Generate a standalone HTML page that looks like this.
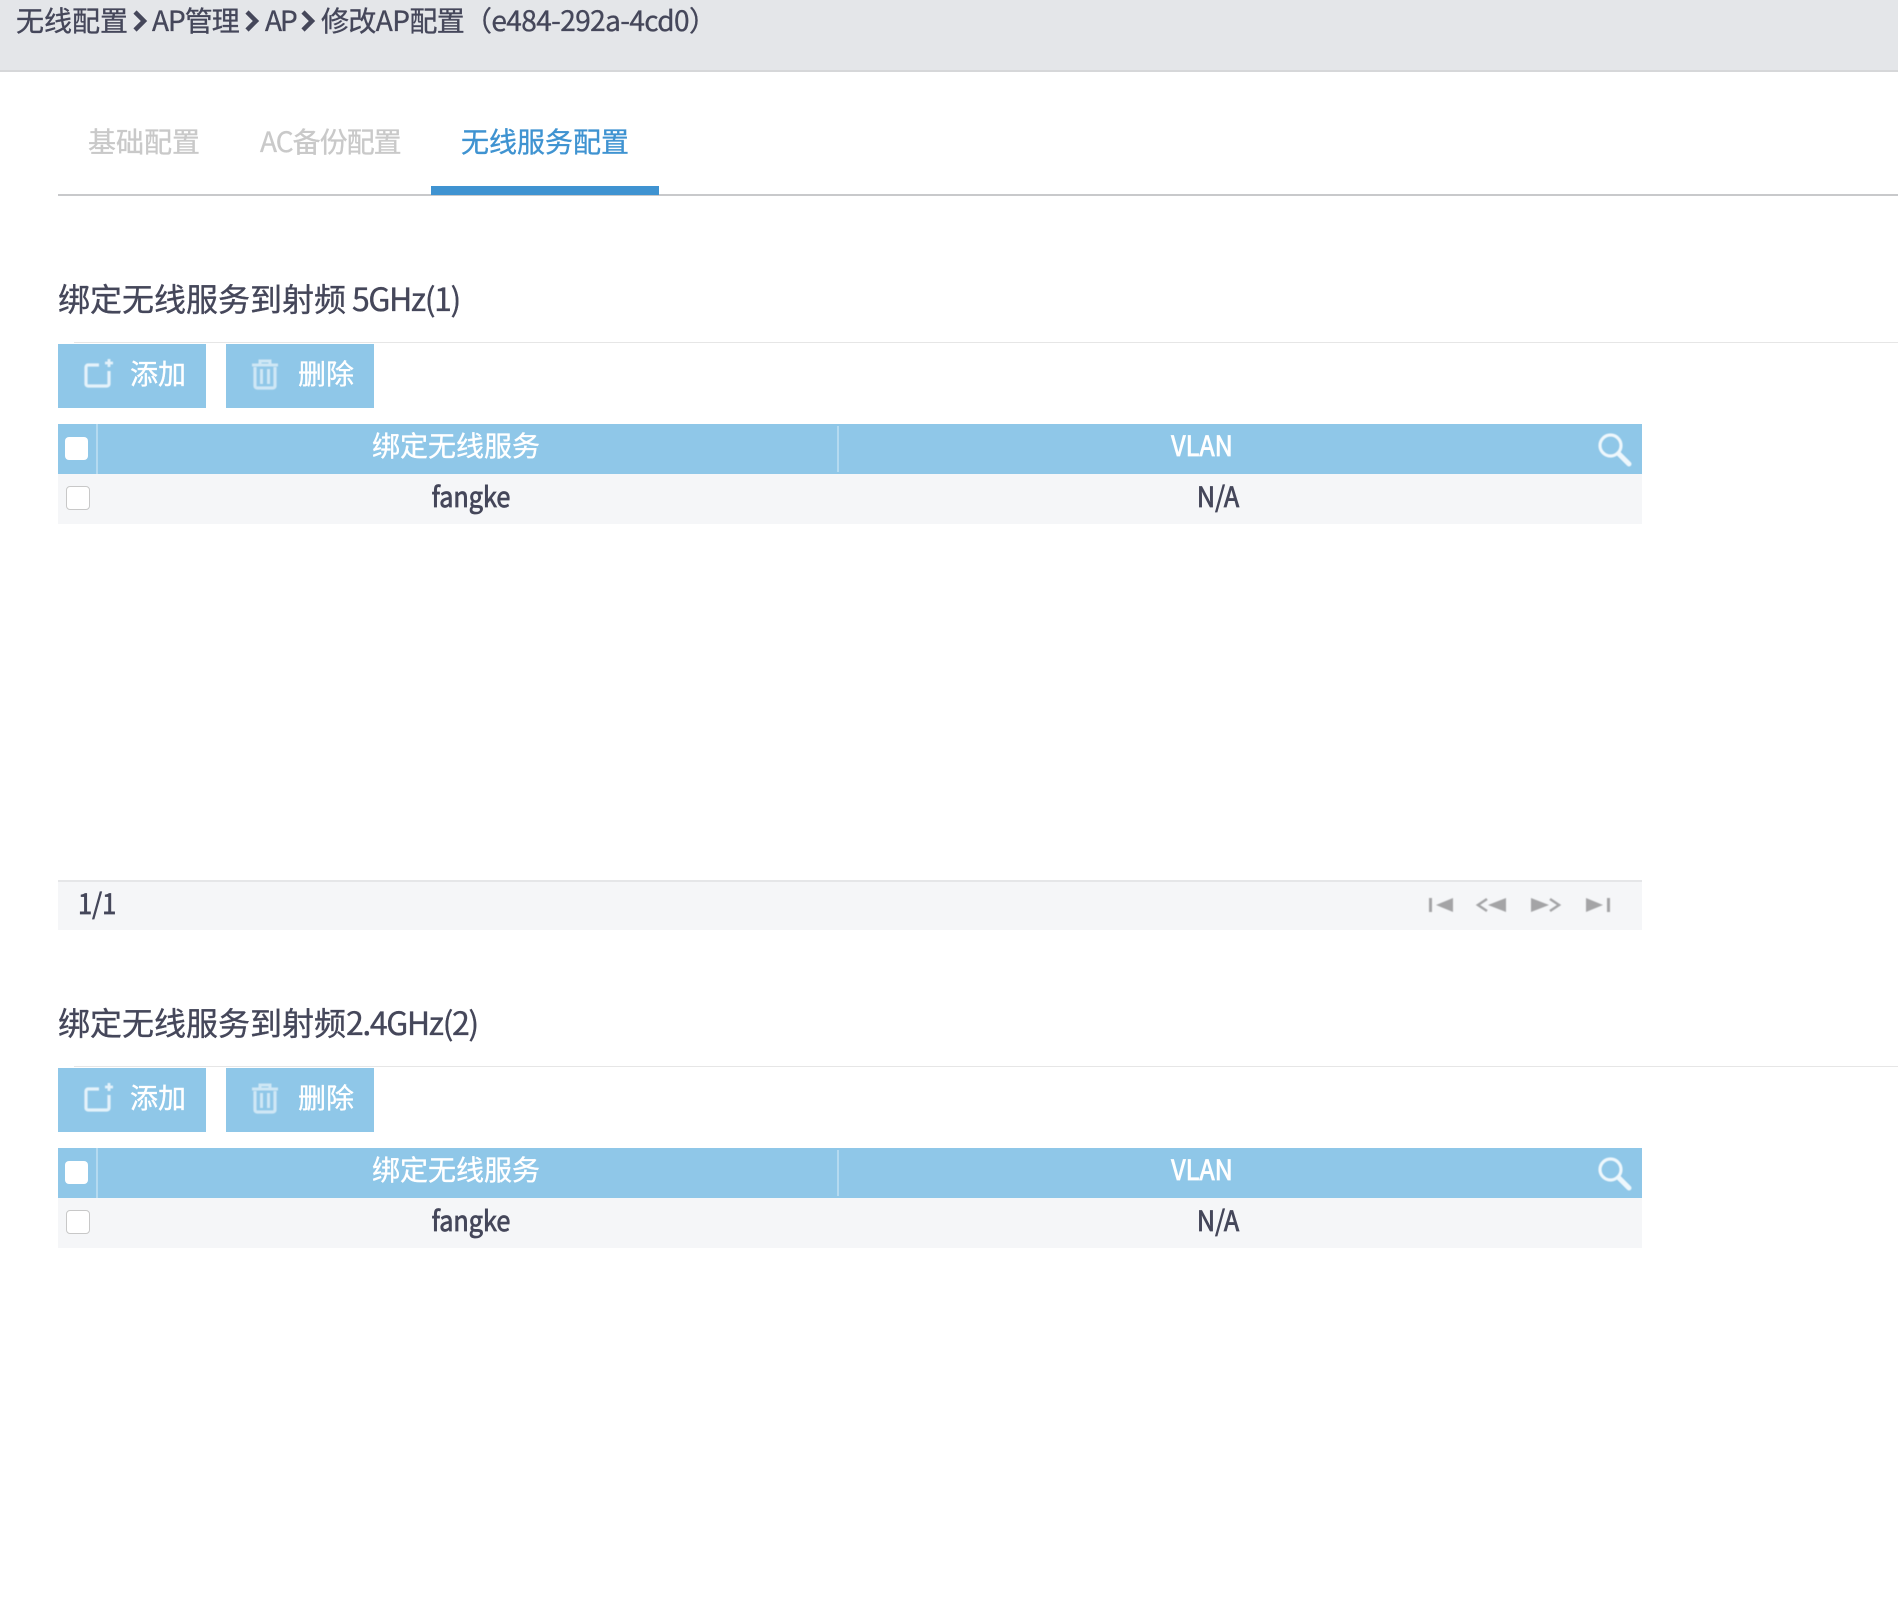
<!DOCTYPE html>
<html lang="zh-CN">
<head>
<meta charset="utf-8">
<title>修改AP配置</title>
<style>
html,body{margin:0;padding:0;background:#fff;}
body{width:1898px;height:1598px;position:relative;overflow:hidden;font-family:"Noto Sans CJK SC","Liberation Sans",sans-serif;color:#45475a;font-size:28px;}
.a{position:absolute;}
.t{position:absolute;line-height:40px;height:40px;white-space:nowrap;-webkit-text-stroke:.35px currentColor;}
.c{transform:translateX(-50%) scaleX(.9);-webkit-text-stroke:.8px currentColor;}
.sec{position:absolute;left:0;width:1898px;height:600px;}
.btn{position:absolute;top:344px;width:148px;height:64px;background:#8fc7e8;}
.btn .t{color:#fff;top:9px;}
.head{position:absolute;left:58px;top:424px;width:1584px;height:50px;background:#8fc7e8;}
.row{position:absolute;left:58px;top:474px;width:1584px;height:50px;background:#f5f6f8;}
.w{color:#fff;}
.cb{position:absolute;box-sizing:border-box;border-radius:4px;}
svg{position:absolute;display:block;overflow:visible;}
.blur{filter:blur(.5px);}
.ttl{font-size:32px;}
.ttl span{letter-spacing:-1.4px;}
</style>
</head>
<body>
<div class="a" style="left:0;top:0;width:1898px;height:70px;background:#e4e6e9;"></div>
<div class="a" style="left:0;top:70px;width:1898px;height:2px;background:#d6d7d9;"></div>

<div class="t" style="left:16px;top:0px;">无线配置</div>
<svg style="left:132px;top:10px;" width="16" height="22" viewBox="0 0 16 22"><path d="M3 2 L12 11 L3 20" fill="none" stroke="#45475a" stroke-width="4.5"/></svg>
<div class="t" style="left:152px;top:0px;letter-spacing:-1px;">AP管理</div>
<svg style="left:244px;top:10px;" width="16" height="22" viewBox="0 0 16 22"><path d="M3 2 L12 11 L3 20" fill="none" stroke="#45475a" stroke-width="4.5"/></svg>
<div class="t" style="left:265px;top:0px;letter-spacing:-2px;">AP</div>
<svg style="left:300px;top:10px;" width="16" height="22" viewBox="0 0 16 22"><path d="M3 2 L12 11 L3 20" fill="none" stroke="#45475a" stroke-width="4.5"/></svg>
<div class="t" style="left:321px;top:0px;letter-spacing:-.6px;">修改AP配置</div>
<div class="t" style="left:464px;top:0px;letter-spacing:-.6px;">（e484-292a-4cd0）</div>

<div class="t" style="left:88px;top:121px;color:#c9c9c9;">基础配置</div>
<div class="t" style="left:260px;top:121px;color:#c9c9c9;letter-spacing:-1px;">AC备份配置</div>
<div class="t" style="left:461px;top:121px;color:#3f93d1;">无线服务配置</div>
<div class="a" style="left:58px;top:194px;width:1840px;height:2px;background:#c8c9cb;"></div>
<div class="a" style="left:431px;top:186px;width:228px;height:9px;background:#3f93d1;"></div>

<!-- Section 1 -->
<div class="sec" style="top:0;">
  <div class="t ttl" style="left:58px;top:278px;">绑定无线服务到射频<span style="margin-left:6px;">5GHz(1)</span></div>
  <div class="a" style="left:74px;top:342px;width:1824px;height:1px;background:#e6e6e6;"></div>
  <div class="btn" style="left:58px;">
    <svg class="blur" style="left:27px;top:15px;" width="30" height="30" viewBox="0 0 30 30"><path d="M14 6 H3 a2 2 0 0 0-2 2 V25 a2 2 0 0 0 2 2 H22 a2 2 0 0 0 2-2 V12" fill="none" stroke="#e4f2fa" stroke-width="3.200"/><path d="M24 0 V8 M20 4 H28" stroke="#e4f2fa" stroke-width="2.800"/></svg>
    <div class="t" style="left:72px;">添加</div>
  </div>
  <div class="btn" style="left:226px;">
    <svg class="blur" style="left:26px;top:15px;" width="26" height="30" viewBox="0 0 26 30"><path d="M0 6 H26 M8 6 V2 H18 V6" fill="none" stroke="#cfe7f5" stroke-width="3"/><path d="M3 8 V27 a2 2 0 0 0 2 2 H21 a2 2 0 0 0 2-2 V8" fill="none" stroke="#cfe7f5" stroke-width="3.200"/><path d="M9.500 10 V25 M16.500 10 V25" stroke="#cfe7f5" stroke-width="3"/></svg>
    <div class="t" style="left:72px;">删除</div>
  </div>
  <div class="head">
    <div class="a" style="left:38px;top:0;width:2px;height:50px;background:#b4daf0;"></div>
    <div class="a" style="left:779px;top:2px;width:2px;height:46px;background:#b4daf0;"></div>
    <div class="cb" style="left:7px;top:13px;width:23px;height:23px;background:#fff;"></div>
    <div class="t w" style="left:314px;top:1px;">绑定无线服务</div>
    <div class="t w c" style="left:1144px;top:1px;">VLAN</div>
    <svg class="blur" style="left:1540px;top:9px;" width="34" height="34" viewBox="0 0 34 34"><circle cx="12.500" cy="12.500" r="10.500" fill="none" stroke="#eef7fc" stroke-width="3.200"/><path d="M21 21 L31 31" stroke="#eef7fc" stroke-width="5" stroke-linecap="round"/></svg>
  </div>
  <div class="row">
    <div class="cb" style="left:8px;top:12px;width:24px;height:24px;background:#fff;border:1px solid #c8c8c8;"></div>
    <div class="t c" style="left:413px;top:2px;">fangke</div>
    <div class="t c" style="left:1160px;top:2px;">N/A</div>
  </div>
</div>

<!-- Pager -->
<div class="a" style="left:58px;top:880px;width:1584px;height:50px;background:#f5f6f8;"></div>
<div class="a" style="left:58px;top:880px;width:1584px;height:2px;background:#e5e6e8;"></div>
<div class="t" style="left:78px;top:883px;transform:scaleX(.91);transform-origin:left center;-webkit-text-stroke:.7px currentColor;">1/1</div>
<svg class="blur" style="left:1429px;top:898px;" width="182" height="14" viewBox="0 0 182 14">
  <g fill="#a4a4a6">
    <rect x="0" y="0" width="3" height="14"/><path d="M7 7 L24 0 V14 Z"/>
    <path d="M58 1 L49 7 L58 13" fill="none" stroke="#a4a4a6" stroke-width="2.500"/><path d="M59 7 L77 0 V14 Z"/>
    <path d="M102 0 L120 7 L102 14 Z"/><path d="M121 1 L130 7 L121 13" fill="none" stroke="#a4a4a6" stroke-width="2.500"/>
    <path d="M157 0 L174 7 L157 14 Z"/><rect x="178" y="0" width="3" height="14"/>
  </g>
</svg>

<!-- Section 2 -->
<div class="sec" style="top:724px;">
  <div class="t ttl" style="left:58px;top:278px;">绑定无线服务到射频<span>2.4GHz(2)</span></div>
  <div class="a" style="left:74px;top:342px;width:1824px;height:1px;background:#e6e6e6;"></div>
  <div class="btn" style="left:58px;">
    <svg class="blur" style="left:27px;top:15px;" width="30" height="30" viewBox="0 0 30 30"><path d="M14 6 H3 a2 2 0 0 0-2 2 V25 a2 2 0 0 0 2 2 H22 a2 2 0 0 0 2-2 V12" fill="none" stroke="#e4f2fa" stroke-width="3.200"/><path d="M24 0 V8 M20 4 H28" stroke="#e4f2fa" stroke-width="2.800"/></svg>
    <div class="t" style="left:72px;">添加</div>
  </div>
  <div class="btn" style="left:226px;">
    <svg class="blur" style="left:26px;top:15px;" width="26" height="30" viewBox="0 0 26 30"><path d="M0 6 H26 M8 6 V2 H18 V6" fill="none" stroke="#cfe7f5" stroke-width="3"/><path d="M3 8 V27 a2 2 0 0 0 2 2 H21 a2 2 0 0 0 2-2 V8" fill="none" stroke="#cfe7f5" stroke-width="3.200"/><path d="M9.500 10 V25 M16.500 10 V25" stroke="#cfe7f5" stroke-width="3"/></svg>
    <div class="t" style="left:72px;">删除</div>
  </div>
  <div class="head">
    <div class="a" style="left:38px;top:0;width:2px;height:50px;background:#b4daf0;"></div>
    <div class="a" style="left:779px;top:2px;width:2px;height:46px;background:#b4daf0;"></div>
    <div class="cb" style="left:7px;top:13px;width:23px;height:23px;background:#fff;"></div>
    <div class="t w" style="left:314px;top:1px;">绑定无线服务</div>
    <div class="t w c" style="left:1144px;top:1px;">VLAN</div>
    <svg class="blur" style="left:1540px;top:9px;" width="34" height="34" viewBox="0 0 34 34"><circle cx="12.500" cy="12.500" r="10.500" fill="none" stroke="#eef7fc" stroke-width="3.200"/><path d="M21 21 L31 31" stroke="#eef7fc" stroke-width="5" stroke-linecap="round"/></svg>
  </div>
  <div class="row">
    <div class="cb" style="left:8px;top:12px;width:24px;height:24px;background:#fff;border:1px solid #c8c8c8;"></div>
    <div class="t c" style="left:413px;top:2px;">fangke</div>
    <div class="t c" style="left:1160px;top:2px;">N/A</div>
  </div>
</div>
</body>
</html>
